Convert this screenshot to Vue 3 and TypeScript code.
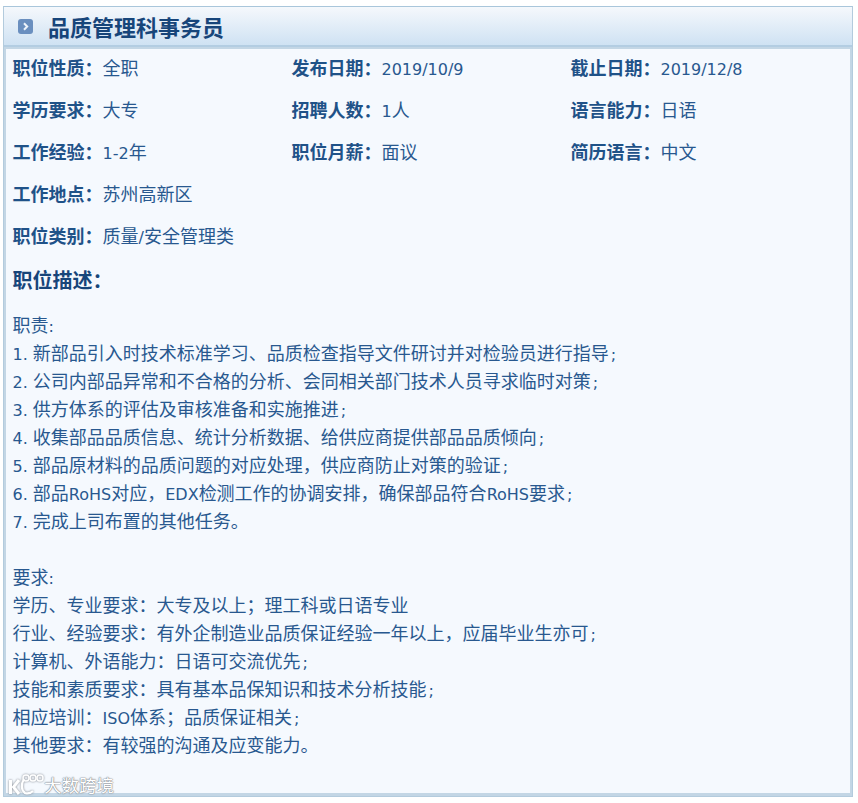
<script setup lang="ts">
type Seg = { t: string; l?: boolean; s?: boolean }
const rows: { k: string; v: Seg[] }[][] = [
  [
    { k: '职位性质：', v: [{ t: '全职' }] },
    { k: '发布日期：', v: [{ t: '2019/10/9', l: true }] },
    { k: '截止日期：', v: [{ t: '2019/12/8', l: true }] }
  ],
  [
    { k: '学历要求：', v: [{ t: '大专' }] },
    { k: '招聘人数：', v: [{ t: '1', l: true }, { t: '人' }] },
    { k: '语言能力：', v: [{ t: '日语' }] }
  ],
  [
    { k: '工作经验：', v: [{ t: '1-2', l: true }, { t: '年' }] },
    { k: '职位月薪：', v: [{ t: '面议' }] },
    { k: '简历语言：', v: [{ t: '中文' }] }
  ],
  [{ k: '工作地点：', v: [{ t: '苏州高新区' }] }],
  [{ k: '职位类别：', v: [{ t: '质量' }, { t: '/', l: true }, { t: '安全管理类' }] }]
]
const split = (s: string): Seg[] =>
  (s.match(/;$|[\x20-\x7e]+|[^\x20-\x7e]+/g) || []).map((t) => ({
    t,
    l: /^[\x20-\x7e]/.test(t),
    s: t === ';'
  }))
const lines = [
  '职责:',
  '1. 新部品引入时技术标准学习、品质检查指导文件研讨并对检验员进行指导;',
  '2. 公司内部品异常和不合格的分析、会同相关部门技术人员寻求临时对策;',
  '3. 供方体系的评估及审核准备和实施推进;',
  '4. 收集部品品质信息、统计分析数据、给供应商提供部品品质倾向;',
  '5. 部品原材料的品质问题的对应处理，供应商防止对策的验证;',
  '6. 部品RoHS对应，EDX检测工作的协调安排，确保部品符合RoHS要求;',
  '7. 完成上司布置的其他任务。',
  '',
  '要求:',
  '学历、专业要求：大专及以上；理工科或日语专业',
  '行业、经验要求：有外企制造业品质保证经验一年以上，应届毕业生亦可;',
  '计算机、外语能力：日语可交流优先;',
  '技能和素质要求：具有基本品保知识和技术分析技能;',
  '相应培训：ISO体系；品质保证相关;',
  '其他要求：有较强的沟通及应变能力。'
].map(split)
</script>

<template>
  <div class="page">
    <section class="panel">
      <header class="head">
        <svg class="ico" width="15" height="15" viewBox="0 0 15 15">
          <rect x="0" y="0" width="15" height="15" rx="3" fill="#6a8fbf" />
          <path d="M6 4.2 9.2 7.5 6 10.8" fill="none" stroke="#eef4fb" stroke-width="2" />
        </svg>
        <h1>品质管理科事务员</h1>
      </header>
      <div class="body">
        <div v-for="(row, i) in rows" :key="i" class="row">
          <div v-for="c in row" :key="c.k" class="cell">
            <b>{{ c.k }}</b><span class="val"><template v-for="(s, j) in c.v" :key="j"><span :class="{ lat: s.l }">{{ s.t }}</span></template></span>
          </div>
        </div>
        <h2>职位描述：</h2>
        <div class="desc">
          <div v-for="(ln, i) in lines" :key="i" class="line"><template v-for="(s, j) in ln" :key="j"><span :class="{ lat: s.l, semi: s.s }">{{ s.t }}</span></template></div>
        </div>
      </div>
      <div class="mark">
        <svg width="36" height="24" viewBox="0 0 36 24">
          <path d="M2.5 7v14M11 7 5.5 14l5.5 7" fill="none" stroke="#fff" stroke-width="3" />
          <path d="M16 6c-3 5-3 11 1 14 3 1 6 0 8-2" fill="none" stroke="#fff" stroke-width="2.2" />
          <circle cx="18" cy="5" r="3" fill="none" stroke="#fff" stroke-width="1.5" />
          <circle cx="25" cy="5" r="3" fill="none" stroke="#fff" stroke-width="1.5" />
          <circle cx="32" cy="5" r="3" fill="none" stroke="#fff" stroke-width="1.5" />
        </svg>
        <span>大数跨境</span>
      </div>
    </section>
  </div>
</template>

<style>
html, body { margin: 0; background: #fff; }
</style>

<style scoped>
.page {
  padding: 6px 5px 6px 3px;
  font-family: "Noto Sans CJK SC", "Noto Sans", sans-serif;
  color: #28588f;
}
.panel {
  position: relative;
  height: 791px;
  box-sizing: border-box;
  border: 1px solid #b3cbdd;
  border-top-color: #a9c6db;
  background: #c3d6e5;
  display: flex;
  flex-direction: column;
  overflow: hidden;
}
.head {
  height: 38px;
  flex: none;
  display: flex;
  align-items: center;
  gap: 15px;
  padding-left: 14px;
  background: linear-gradient(#f5f8fc, #cfe2f3);
  border-bottom: 2px solid #b3cde2;
}
.ico { flex: none; }
h1 {
  margin: 0;
  font-size: 22px;
  line-height: 38px;
  font-weight: 700;
  color: #17457a;
}
.body {
  flex: 1;
  margin: 2px 2px 3px 2px;
  padding: 0 0 0 6.5px;
  background: #f5f9fe;
  min-height: 0;
}
.row {
  display: flex;
  height: 42px;
  align-items: flex-start;
}
.cell {
  width: 279px;
  height: 36px;
  line-height: 36px;
  font-size: 18px;
  white-space: nowrap;
}
b { font-weight: 700; color: #1f5288; }
.val { color: #28588f; font-weight: 400; }
.lat { font-family: "DejaVu Sans", sans-serif; font-size: 16px; }
.semi { margin-left: 2px; }
h2 {
  margin: 6px 0 0;
  font-size: 20px;
  line-height: 30px;
  height: 30px;
  font-weight: 700;
  color: #17457a;
}
.desc { margin-top: 15px; }
.line {
  height: 28px;
  line-height: 28px;
  font-size: 18px;
  white-space: nowrap;
  color: #28588f;
}
.mark {
  position: absolute;
  left: 4px;
  bottom: -1px;
  display: flex;
  align-items: center;
  color: #fff;
  font-size: 17.5px;
  line-height: 24px;
  text-shadow: 0 0 1px #7d838b, 0 0 1px #7d838b, 0 0 2px #9aa0a8;
}
.mark svg { filter: drop-shadow(0 0 1px #7d838b); }
</style>
